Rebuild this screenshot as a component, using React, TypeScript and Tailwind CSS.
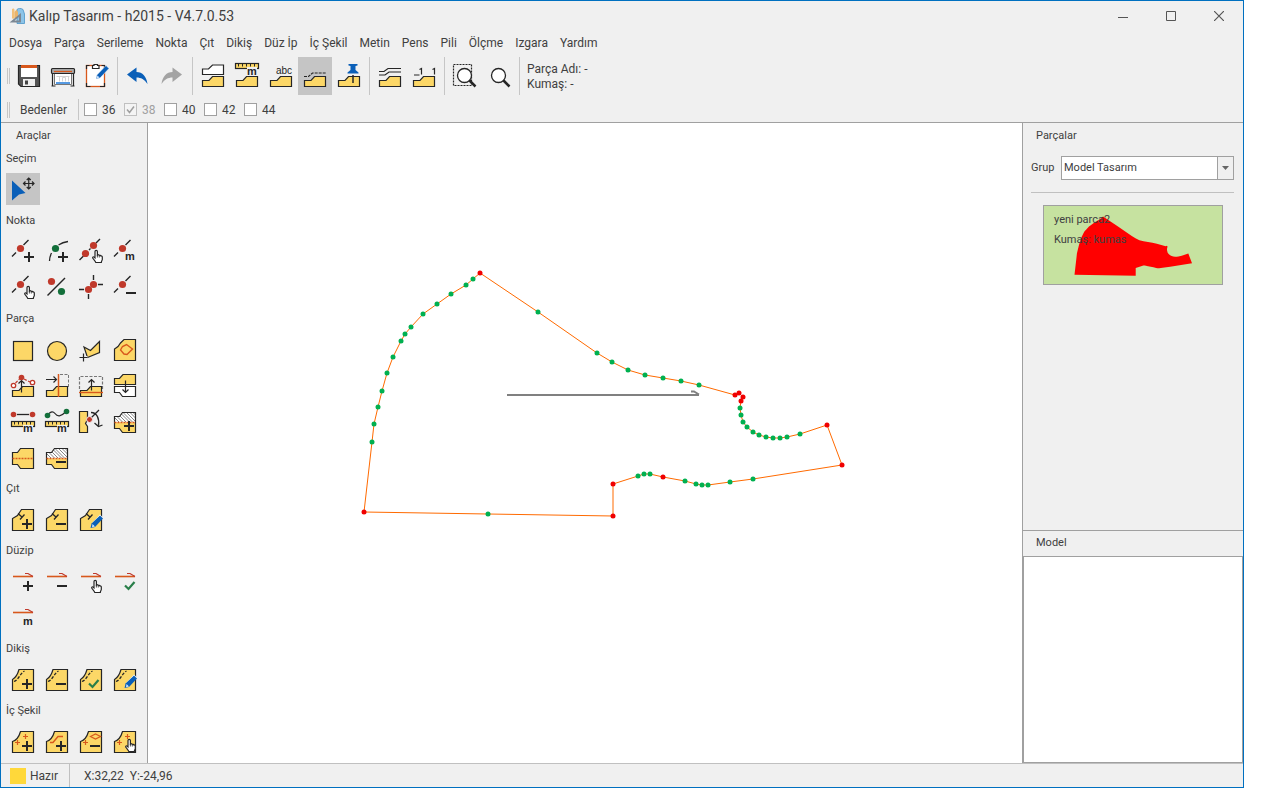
import { useState } from "react";
import type { FC, ReactNode } from "react";

type Point = [number, number, boolean?];

interface Tool {
  name: string;
  icon: ReactNode;
  active?: boolean;
}

interface ToolGroup {
  title: string;
  tools: Tool[];
}

const INK = "#262626";
const GOLD = "#fcd767";
const RED = "#c0392b";
const RUST = "#d8581c";
const GREEN = "#136f3a";
const BLUE = "#0a5fb8";

// outline of the part, third value marks a corner point
const points: Point[] = [
  [480, 273, true], [538, 312], [597, 353], [612, 362], [628, 370], [645, 375], [663, 378], [681, 381], [699, 385],
  [735, 395, true], [739, 393, true], [743, 397, true], [741, 401, true], [740, 408], [741, 415], [743, 422],
  [747, 427], [753, 432], [759, 435], [766, 437], [773, 438], [780, 438], [787, 437], [800, 434], [827, 425, true],
  [842, 465, true], [753, 479], [730, 482], [708, 485], [702, 485], [696, 484], [685, 481], [663, 477, true],
  [650, 474], [644, 474], [638, 476], [613, 484, true], [613, 516, true], [488, 514], [364, 512, true], [372, 442],
  [374, 424], [378, 407], [382, 391], [387, 373], [393, 357], [401, 341], [405, 334], [411, 327], [423, 314],
  [437, 304], [451, 294], [466, 285], [473, 279],
];

const outline = points.map(([x, y]) => `${x},${y}`).join(" ");

const menus = ["Dosya", "Parça", "Serileme", "Nokta", "Çıt", "Dikiş", "Düz İp", "İç Şekil", "Metin", "Pens", "Pili", "Ölçme", "Izgara", "Yardım"];

const sizes = [
  { size: "36" },
  { size: "38", locked: true },
  { size: "40" },
  { size: "42" },
  { size: "44" },
];

/* ---- icon parts ---- */

const Dot: FC<{ x: number; y: number; color?: string }> = ({ x, y, color = RED }) => (
  <circle cx={x} cy={y} r="3.6" fill={color} />
);

const Plus: FC<{ x?: number; y?: number }> = ({ x = 21, y = 21 }) => (
  <path d={`M${x - 5} ${y}h10M${x} ${y - 5}v10`} stroke={INK} strokeWidth="2" fill="none" />
);

const Minus: FC<{ x?: number; y?: number }> = ({ x = 21, y = 21 }) => (
  <path d={`M${x - 5} ${y}h10`} stroke={INK} strokeWidth="2" fill="none" />
);

const Check = () => <path d="M17 20.5l3.5 3.5 6-7" stroke="#2a7f4a" strokeWidth="2.2" fill="none" />;

const Hand: FC<{ x: number; y: number }> = ({ x, y }) => (
  <g transform={`translate(${x - 5} ${y - 6})`}>
    <path
      d="M3 8V1.5a1.2 1.2 0 0 1 2.4 0V5c.6-.5 1.6-.3 1.8.4.8-.4 1.6 0 1.7.6.8-.2 1.4.3 1.4 1V9.500c0 .8-1 1.500-1 3H3.800C3.500 11 1.500 9.500.7 8c-.3-1 .8-1.500 1.400-.8z"
      fill="#fff"
      stroke={INK}
      strokeWidth="1.2"
    />
    <path d="M5.400 5v2.500M7.300 5.500v2" stroke={INK} strokeWidth="0.8" />
  </g>
);

const Pencil = () => (
  <g>
    <path d="M18.500 19.500l7.500-8 3 3-8 8-4.500 2z" fill="#fff" />
    <path d="M26 12.500l3 3-8 8.500-4.500 1 1-4.500z" fill={BLUE} />
    <path d="M18.500 21l2.500 2.500-3 .7z" fill="#cfe6ff" />
  </g>
);

const Letters: FC<{ x: number; y: number; children: string }> = ({ x, y, children }) => (
  <text x={x} y={y} fontSize="11" fontWeight="bold" fontFamily="Liberation Sans, sans-serif" textAnchor="middle" fill={INK}>
    {children}
  </text>
);

const PointLine = () => (
  <g>
    <path d="M6 21.500l4-4M17.500 10l5-5" stroke={INK} strokeWidth="1.400" />
    <Dot x={14.500} y={13.500} />
  </g>
);

const Piece: FC<{ y?: number }> = ({ y = 27.5 }) => (
  <path d={`M6.500 ${y}v-6h6.500l3.500-4h11v10z`} fill={GOLD} stroke={INK} strokeWidth="1.200" />
);

const Arm = () => (
  <path d="M6.500 27.500V16.500C11 15 13 12 14.500 6.500H27.500V27.500z" fill={GOLD} stroke={INK} strokeWidth="1.200" />
);

const Seam = () => (
  <g>
    <path d="M6.500 27.500V16.500C10 14.500 11.500 12 13 6.500H27.500V27.500z" fill={GOLD} stroke={INK} strokeWidth="1.200" />
    <path d="M8 18.500c5-2 6-8 10.500-10.500" fill="none" stroke={INK} strokeWidth="1.300" strokeDasharray="3 1.500" />
  </g>
);

const Notch = () => (
  <g>
    <path d="M6.500 27.500V15.500L11.500 12.500L15.500 6.500H27.500V27.500z" fill={GOLD} stroke={INK} strokeWidth="1.200" />
    <path d="M12 10.500l4.500 4M14 16.500l4.500-5" stroke={INK} strokeWidth="1.300" />
  </g>
);

const Grain = () => (
  <g>
    <path d="M7 11.500h20" stroke={RUST} strokeWidth="1.600" />
    <path d="M19 8.500h3l5 3" stroke={RED} strokeWidth="1.200" fill="none" />
  </g>
);

const Cross: FC<{ x: number; y: number }> = ({ x, y }) => (
  <path d={`M${x - 2.5} ${y}h5M${x} ${y - 2.5}v5`} stroke={RUST} strokeWidth="1.200" />
);

const Ruler: FC<{ y: number }> = ({ y }) => (
  <g>
    <rect x="5.500" y={y} width="23" height="5" fill={GOLD} stroke={INK} strokeWidth="1.200" />
    <path d={`M8.500 ${y}v3M12.500 ${y}v3M16.500 ${y}v3M20.500 ${y}v3M24.500 ${y}v3`} stroke={INK} />
  </g>
);

const RulerM: FC = () => (
  <g>
    <Ruler y={16.5} />
    <rect x="17" y="20" width="10" height="8" fill="#f0f0f0" />
    <Letters x={22} y={27}>m</Letters>
  </g>
);

const halfPath = "M6.500 11.500h5l3-4H27.500V27.500H14.500l-3-4h-5z";

const Fold: FC<{ hatch?: boolean }> = ({ hatch }) => (
  <g>
    <path d={halfPath} fill={GOLD} />
    {hatch && (
      <g>
        <path d="M6.500 17.500v-6h5l3-4H27.500v10z" fill="#fff" />
        <path
          d="M7 13l4 4M9 11.500l5.500 5.500M12 11l6 6M13.500 9l8 8M15 7.500l9.500 9.500M18.500 7.500l9 9M22 7.500l5.500 5.500M25 7.500l2.500 2.500"
          stroke="#777"
          strokeWidth="0.900"
        />
      </g>
    )}
    <path d={halfPath} fill="none" stroke={INK} strokeWidth="1.200" />
    <path d="M6.500 17.500h21" stroke={RUST} strokeWidth="1.400" strokeDasharray="2 1" />
  </g>
);

const groups: ToolGroup[] = [
  {
    title: "Seçim",
    tools: [
      {
        name: "Seç ve taşı",
        active: true,
        icon: (
          <g>
            <path d="M6 7.500L19.500 20l-6.500 1.500L6 27.500z" fill={BLUE} />
            <path
              d="M17.500 10.500h10.500M22.750 5v11M19.500 8.500l-2 2 2 2M26 8.500l2 2-2 2M20.750 7l2-2 2 2M20.750 14l2 2 2-2"
              stroke={INK}
              strokeWidth="1.200"
              fill="none"
            />
          </g>
        ),
      },
    ],
  },
  {
    title: "Nokta",
    tools: [
      { name: "Nokta ekle", icon: <g><PointLine /><Plus x={23} y={22} /></g> },
      {
        name: "Eğri noktası ekle",
        icon: (
          <g>
            <path d="M9.500 26c0-3 .5-5 2-8M18.500 10c3-2 6-3 9.500-3.500" stroke={INK} strokeWidth="1.300" fill="none" />
            <Dot x={15.5} y={13.5} color={GREEN} />
            <Plus x={23} y={22} />
          </g>
        ),
      },
      {
        name: "Noktaları taşı",
        icon: (
          <g>
            <path d="M5.500 25l4-4M15 15l1.500-1.500M22 8l4-4" stroke={INK} strokeWidth="1.400" />
            <Dot x={11.5} y={18.5} />
            <Dot x={19.5} y={10.5} />
            <Hand x={23} y={21} />
          </g>
        ),
      },
      { name: "Ölçülü nokta", icon: <g><PointLine /><Letters x={22} y={25}>m</Letters></g> },
      { name: "Nokta taşı", icon: <g><PointLine /><Hand x={23} y={21} /></g> },
      {
        name: "Nokta tipi",
        icon: (
          <g>
            <path d="M7.500 24.500L25 7" stroke={INK} strokeWidth="1.400" />
            <Dot x={11.5} y={10.5} />
            <Dot x={21.5} y={20.5} color={GREEN} />
          </g>
        ),
      },
      {
        name: "Nokta hizala",
        icon: (
          <g>
            <path d="M19.500 4v5M24 13.500h5M5 18.500h5M14.500 23v5" stroke={INK} strokeWidth="1.400" />
            <Dot x={19.5} y={13.5} />
            <Dot x={14.5} y={18.5} />
          </g>
        ),
      },
      { name: "Nokta sil", icon: <g><PointLine /><Minus x={23} y={22} /></g> },
    ],
  },
  {
    title: "Parça",
    tools: [
      { name: "Dikdörtgen", icon: <rect x="7.500" y="8.500" width="19" height="19" fill={GOLD} stroke={INK} strokeWidth="1.200" /> },
      { name: "Daire", icon: <circle cx="17" cy="18" r="9.500" fill={GOLD} stroke={INK} strokeWidth="1.200" /> },
      {
        name: "Serbest çizim",
        icon: (
          <g>
            <path d="M10 14l6.500 3.500L25.500 8.500V19.500l-12 5z" fill={GOLD} stroke={INK} strokeWidth="1.200" />
            <path d="M5.500 24.500h8M9.500 20.500v8" stroke="#f0f0f0" strokeWidth="3" />
            <path d="M5.500 24.500h8M9.500 20.500v8" stroke={INK} strokeWidth="1.200" />
          </g>
        ),
      },
      {
        name: "İç parçadan üret",
        icon: (
          <g>
            <path d="M6.500 27.500V16L10 13.500 12.500 10 16 6.500H27.500V27.500z" fill={GOLD} stroke={INK} strokeWidth="1.200" />
            <path d="M12.500 17l2-3.500L18.500 11.500l6 4.500-5.500 5.500-3-.5z" fill="none" stroke={RUST} strokeWidth="1.400" />
          </g>
        ),
      },
      {
        name: "Tepe taşı",
        icon: (
          <g>
            <Piece />
            <path d="M9.500 14l4-4M18 10l6 3" stroke={RED} strokeWidth="1.200" strokeDasharray="3 1.500" />
            <circle cx="7.500" cy="16.500" r="2.200" fill="#fff" stroke={RED} strokeWidth="1.300" />
            <circle cx="26.500" cy="13.500" r="2.200" fill="#fff" stroke={RED} strokeWidth="1.300" />
            <path d="M15.500 23.500V11.500M12.500 14.500l3-3 3 3" stroke={INK} strokeWidth="1.200" fill="none" />
            <circle cx="15.500" cy="8.500" r="2.800" fill={RED} />
          </g>
        ),
      },
      {
        name: "Kenara uzat",
        icon: (
          <g>
            <Piece />
            <path d="M20 5.500h8.500V18" stroke="#777" fill="none" strokeDasharray="3 1.500" />
            <path d="M18.500 5v23" stroke={RUST} strokeWidth="1.500" />
            <path d="M6 10.500h10.500M13.500 7.500l3 3-3 3" stroke={INK} strokeWidth="1.200" fill="none" />
          </g>
        ),
      },
      {
        name: "Yukarı uzat",
        icon: (
          <g>
            <path d="M5.500 20V7.500h23V20" stroke="#777" strokeWidth="1.200" fill="none" strokeDasharray="3 1.500" />
            <Piece />
            <path d="M5 23.500h24" stroke={RUST} strokeWidth="1.400" />
            <path d="M17.500 21.500V10.500M14.500 13.500l3-3 3 3" stroke={INK} strokeWidth="1.200" fill="none" />
          </g>
        ),
      },
      {
        name: "Aynala",
        icon: (
          <g>
            <path d="M6.500 15.500v-6h5l3.500-4h12.500v10z" fill={GOLD} stroke={INK} strokeWidth="1.200" />
            <path d="M6.500 17.500v6h5l3 4h13v-10z" fill="#fff" stroke={INK} strokeWidth="1.200" />
            <path d="M17.500 11.500v12M14.500 20.500l3 3 3-3" stroke={INK} strokeWidth="1.200" fill="none" />
          </g>
        ),
      },
      {
        name: "Düz ölç",
        icon: (
          <g>
            <path d="M11 9.500h12" stroke={INK} strokeWidth="1.300" />
            <circle cx="7.500" cy="9.500" r="2.800" fill={RED} />
            <circle cx="26.500" cy="9.500" r="2.800" fill={RED} />
            <RulerM />
          </g>
        ),
      },
      {
        name: "Eğri ölç",
        icon: (
          <g>
            <path d="M9 8.500c2-2 4-2.500 6 0 2.500 3.500 6 3 10-1" stroke={INK} strokeWidth="1.200" fill="none" />
            <circle cx="7.500" cy="10.500" r="2.800" fill={GREEN} />
            <circle cx="26.500" cy="6.500" r="2.800" fill={GREEN} />
            <RulerM />
          </g>
        ),
      },
      {
        name: "Döndür",
        icon: (
          <g>
            <path d="M5.500 6.500h8v8l-2 4 2 3v6h-8z" fill={GOLD} stroke={INK} strokeWidth="1.200" />
            <path d="M15.500 14.500L25 5M17 7.500c6 0 8.500 6 7.500 13M20.500 18l4 3.500 4-1.500" stroke={INK} strokeWidth="1.300" fill="none" />
            <circle cx="15.500" cy="14.500" r="3" fill={RED} stroke="#f0f0f0" />
          </g>
        ),
      },
      { name: "Kat ekle", icon: <g><Fold hatch /><Plus /></g> },
      { name: "Kat çizgisi", icon: <Fold /> },
      { name: "Kat sil", icon: <g><Fold hatch /><Minus /></g> },
    ],
  },
  {
    title: "Çıt",
    tools: [
      { name: "Çıt ekle", icon: <g><Notch /><Plus /></g> },
      { name: "Çıt sil", icon: <g><Notch /><Minus /></g> },
      { name: "Çıt düzenle", icon: <g><Notch /><Pencil /></g> },
    ],
  },
  {
    title: "Düzip",
    tools: [
      { name: "Düzip ekle", icon: <g><Grain /><Plus x={22} /></g> },
      { name: "Düzip sil", icon: <g><Grain /><Minus x={22} /></g> },
      { name: "Düzip taşı", icon: <g><Grain /><Hand x={22} y={21} /></g> },
      { name: "Düzip onayla", icon: <g><Grain /><Check /></g> },
      { name: "Düzip ölçü", icon: <g><Grain /><Letters x={22} y={24}>m</Letters></g> },
    ],
  },
  {
    title: "Dikiş",
    tools: [
      { name: "Dikiş ekle", icon: <g><Seam /><Plus /></g> },
      { name: "Dikiş sil", icon: <g><Seam /><Minus /></g> },
      { name: "Dikiş onayla", icon: <g><Seam /><g transform="translate(-2 0)"><Check /></g></g> },
      { name: "Dikiş düzenle", icon: <g><Seam /><Pencil /></g> },
    ],
  },
  {
    title: "İç Şekil",
    tools: [
      { name: "Şekil ekle", icon: <g><Arm /><Cross x={19.5} y={11.5} /><Cross x={11.5} y={17.5} /><Plus /></g> },
      {
        name: "Çizgi ekle",
        icon: (
          <g>
            <Arm />
            <path d="M10 17.500h3l5-6h5" stroke={RUST} strokeWidth="1.400" fill="none" />
            <Plus />
          </g>
        ),
      },
      {
        name: "Şekil sil",
        icon: (
          <g>
            <Arm />
            <Cross x={11.5} y={17.5} />
            <path d="M16.500 11.500l5-2.500 5 2.500-5 2.500z" stroke={RUST} strokeWidth="1.200" fill="none" />
            <Minus />
          </g>
        ),
      },
      { name: "Şekil taşı", icon: <g><Arm /><Cross x={19.5} y={11.5} /><Cross x={11.5} y={17.5} /><Hand x={22} y={20} /></g> },
    ],
  },
];

const BarPiece = () => <Piece y={29.5} />;

const toolbar: Tool[][] = [
  [
    {
      name: "Kaydet",
      icon: (
        <g>
          <path d="M6.500 8.500h21v21H9l-2.500-2.500z" fill="#555" stroke={INK} strokeWidth="1.200" />
          <path d="M9 8h16v4H9z" fill={RUST} />
          <path d="M9 11h16v9H9z" fill="#fff" />
          <path d="M11 22h12v7H11z" fill="#f0f0f0" />
          <path d="M13 23.500h3v4h-3z" fill="#444" />
        </g>
      ),
    },
    {
      name: "Çizdir",
      icon: (
        <g>
          <rect x="5.500" y="11.500" width="23" height="5" rx="1" fill="#a6a6a6" stroke={INK} strokeWidth="1.200" />
          <path d="M8 14.500h18" stroke={RUST} strokeWidth="1.200" />
          <path d="M9 17h16v10H9z" fill="#fff" />
          <path d="M10.500 19.500h13M13.500 19.500v5M16.500 24.500v-4h3v4M22.500 19.500v5" stroke="#d4d4d4" fill="none" />
          <path d="M10 26h14" stroke="#1e78d8" strokeWidth="1.500" />
          <path d="M8.500 17v10.500h17V17" fill="none" stroke="#777" />
          <path d="M6.500 17v11.500M27.500 17v11.500M5.500 29h4M24.500 29h4" stroke={INK} strokeWidth="1.200" />
        </g>
      ),
    },
    {
      name: "Düzenle",
      icon: (
        <g>
          <rect x="6.500" y="8.500" width="18" height="21" fill="#fff" stroke={RUST} strokeWidth="1.300" />
          <path d="M6.500 12V8.500h3M21.500 8.500h3v3M6.500 26v3.500h4M20 29.500h4.500V26" fill="none" stroke={INK} strokeWidth="1.200" />
          <path d="M12.500 11.500v-3h1.500V7.500h3.500v1h1.500v3z" fill="#fff" stroke={INK} strokeWidth="1.200" />
          <path d="M26 8.500l3 3-9 9.500-4 1 .8-4z" fill={BLUE} stroke="#fff" strokeWidth="0.500" />
          <path d="M17.500 18.500l2 2-3 1z" fill="#cfe6ff" />
        </g>
      ),
    },
  ],
  [
    { name: "Geri al", icon: <path d="M6 17.500L15.500 10.500v4.500c6 0 10 4.500 11 12-3-4.500-6.500-6.500-11-6.500V25z" fill={BLUE} /> },
    { name: "Yinele", icon: <path d="M27 17.500L17.500 10.500v4.500c-6 0-10 4.500-11 12 3-4.500 6.500-6.500 11-6.500V25z" fill="#a3a3a3" /> },
  ],
  [
    { name: "Parçalar", icon: <g><path d="M6.500 17.500v-5.500h6l4-4h11v9.500z" fill="#fff" stroke={INK} strokeWidth="1.200" /><BarPiece /></g> },
    {
      name: "Ölçüler",
      icon: (
        <g>
          <Ruler y={6.5} />
          <rect x="17" y="10" width="10" height="8" fill="#f0f0f0" />
          <Letters x={22} y={18}>m</Letters>
          <BarPiece />
        </g>
      ),
    },
    {
      name: "Yazılar",
      icon: (
        <g>
          <text x="20" y="17" fontSize="10" fontFamily="Liberation Sans, sans-serif" textAnchor="middle" fill={INK}>abc</text>
          <BarPiece />
        </g>
      ),
    },
    {
      name: "Dikiş payı",
      active: true,
      icon: <g><path d="M6 19.500h4.500l4-3.500H28" stroke={INK} strokeWidth="1.200" fill="none" strokeDasharray="3 1" /><BarPiece /></g>,
    },
    {
      name: "Sabitle",
      icon: (
        <g>
          <BarPiece />
          <path d="M16.500 7h9v1.500l-2 .5v4l3 2.500v1h-11v-1l3-2.500V9l-2-.500z" fill={BLUE} />
          <path d="M21 18v8" stroke={INK} strokeWidth="1.500" />
        </g>
      ),
    },
  ],
  [
    {
      name: "Katmanlar",
      icon: <g><path d="M6 14.500h5l4-3h13M6 18h6l4-3h12" stroke={INK} strokeWidth="1.200" fill="none" /><BarPiece /></g>,
    },
    {
      name: "Numaralar",
      icon: (
        <g>
          <path d="M12.500 12.500l2-1v6M25.500 12.500l2-1v6M7 18h5.500" stroke={INK} strokeWidth="1.200" fill="none" />
          <BarPiece />
        </g>
      ),
    },
  ],
  [
    {
      name: "Alan yakınlaştır",
      icon: (
        <g>
          <path d="M5.500 7.500h18v21h-18z" fill="none" stroke={INK} strokeWidth="1.200" strokeDasharray="2 1" />
          <circle cx="16.500" cy="18.500" r="7" fill="#fff" stroke={INK} strokeWidth="1.300" />
          <path d="M21.500 23.500l6 6" stroke={INK} strokeWidth="2.500" />
        </g>
      ),
    },
    {
      name: "Yakınlaştır",
      icon: (
        <g>
          <circle cx="16.500" cy="18.500" r="7" fill="#fff" stroke={INK} strokeWidth="1.300" />
          <path d="M21.500 23.500l6 6" stroke={INK} strokeWidth="2.500" />
        </g>
      ),
    },
  ],
];

const Logo = () => (
  <svg width="16" height="16" viewBox="0 0 16 16" aria-hidden>
    <path d="M8 1.500c1.500-1.500 4-1.500 6 0L15.500 6v9.500H8z" fill="#8cc4e8" stroke="#4a94c8" strokeWidth="0.800" />
    <path d="M3 1c1-1 2.500-.500 2.500 1v8c0 1-2.500 1-2.500 0z" fill="#f2c078" />
    <path d="M5.500 4l2-2.500L9 4v6H5.500z" fill="#e9b46a" />
    <path d="M0.500 14.500L12 5v9.500zM5.500 12.500h4.500V9z" fill="#7c8894" fillRule="evenodd" />
  </svg>
);

const Grip = () => <span className="h-4 w-[3px] shrink-0 border-x border-[#c6c6c6]" />;

const Divider = () => <span className="mx-[3px] w-px self-stretch bg-[#c6c6c6]" />;

const ToolButton: FC<{ tool: Tool }> = ({ tool }) => (
  <button title={tool.name} aria-label={tool.name} className={`h-8 w-[34px] ${tool.active ? "bg-[#c5c5c5]" : "hover:bg-[#dcdcdc]"}`}>
    <svg width="34" height="32" viewBox="0 0 34 32" aria-hidden>
      {tool.icon}
    </svg>
  </button>
);

const App: FC = () => {
  const [checked, setChecked] = useState<string[]>(["38"]);

  const toggle = (size: string) => {
    setChecked(checked.includes(size) ? checked.filter((s) => s !== size) : [...checked, size]);
  };

  return (
    <div className="h-screen bg-white pr-[26px] font-['Roboto',sans-serif] text-xs text-[#404040]">
      <div className="flex h-full flex-col border border-[#0070c0] bg-[#f0f0f0]">
        <header className="flex h-[30px] shrink-0 items-center">
          <h1 className="flex flex-1 items-center gap-1 pl-2 text-sm">
            <Logo />
            Kalıp Tasarım - h2015 - V4.7.0.53
          </h1>
          <button aria-label="Küçült" className="flex h-7 w-12 items-center justify-center">
            <svg width="10" height="10"><path d="M0 6.500h10" stroke="#555" /></svg>
          </button>
          <button aria-label="Ekranı kapla" className="flex h-7 w-12 items-center justify-center">
            <svg width="10" height="10"><path d="M.5.500h9v9h-9z" fill="none" stroke="#555" /></svg>
          </button>
          <button aria-label="Kapat" className="flex h-7 w-12 items-center justify-center">
            <svg width="10" height="10"><path d="M0 0l10 10M10 0L0 10" stroke="#555" strokeWidth="1.200" /></svg>
          </button>
        </header>

        <nav className="flex h-6 shrink-0 items-center gap-3 pl-2">
          {menus.map((menu) => (
            <button key={menu}>{menu}</button>
          ))}
        </nav>

        <div className="mt-0.5 flex h-[38px] shrink-0 items-center pl-1.5">
          <Grip />
          <div className="flex h-full items-center pl-0.5">
            {toolbar.map((section, i) => (
              <div key={i} className="flex h-full">
                {section.map((tool) => (
                  <button
                    key={tool.name}
                    title={tool.name}
                    aria-label={tool.name}
                    className={`w-[34px] ${tool.active ? "bg-[#c5c5c5]" : "hover:bg-[#dcdcdc]"}`}
                  >
                    <svg width="34" height="38" viewBox="0 0 34 38" aria-hidden>{tool.icon}</svg>
                  </button>
                ))}
                <Divider />
              </div>
            ))}
          </div>
          <div className="pt-0.5 pl-1 leading-[15px]">
            <p>Parça Adı: -</p>
            <p>Kumaş: -</p>
          </div>
        </div>

        <div className="flex h-7 shrink-0 items-center border-b border-[#a0a0a0] pt-1 pb-0.5 pl-1.5">
          <Grip />
          <span className="w-[65px] pl-2.5">Bedenler</span>
          <Divider />
          <div className="flex pl-0.5">
            {sizes.map(({ size, locked }) => (
              <label key={size} className={`flex w-10 items-center gap-[5px] ${locked ? "text-[#a0a0a0]" : ""}`}>
                <span className="relative flex">
                  <input
                    type="checkbox"
                    checked={checked.includes(size)}
                    disabled={locked}
                    onChange={() => toggle(size)}
                    className="peer size-[13px] appearance-none border border-[#a0a0a0] bg-white disabled:border-[#c0c0c0] disabled:bg-[#f4f4f4]"
                  />
                  <svg className="pointer-events-none invisible absolute inset-0 peer-checked:visible" width="13" height="13">
                    <path d="M3 6.500L5.500 9.500 10 3.500" fill="none" stroke="#a0a0a0" strokeWidth="1.500" />
                  </svg>
                </span>
                {size}
              </label>
            ))}
          </div>
        </div>

        <div className="flex min-h-0 flex-1">
          <aside className="w-[147px] shrink-0 border-r border-[#a0a0a0] pl-[5px] text-[11px]">
            <h2 className="flex h-[26px] items-center pl-2.5">Araçlar</h2>
            {groups.map((group) => (
              <section key={group.title} className="pb-1.5">
                <h3 className="h-5 leading-5">{group.title}</h3>
                <div className="flex flex-wrap gap-y-1 pt-1">
                  {group.tools.map((tool) => (
                    <ToolButton key={tool.name} tool={tool} />
                  ))}
                </div>
              </section>
            ))}
          </aside>

          <main className="min-w-0 flex-1 bg-white">
            <svg className="size-full" viewBox="148 123 874 640" preserveAspectRatio="xMinYMin slice" aria-label="Parça çizimi">
              <path d="M507 395h192M691 391.500h3l5 3" stroke="#808080" strokeWidth="2" fill="none" />
              <polygon points={outline} fill="none" stroke="#ff6a00" strokeWidth="1" />
              {points.map(([x, y, corner], i) => (
                <circle key={i} cx={x} cy={y} r="2.500" fill={corner ? "#f00000" : "#00b050"} />
              ))}
            </svg>
          </main>

          <aside className="flex w-[221px] shrink-0 flex-col border-l border-[#a0a0a0] text-[11px]">
            <h2 className="flex h-[26px] shrink-0 items-center pl-[13px]">Parçalar</h2>
            <div className="mt-[7px] mr-[9px] ml-2 flex items-center border-b border-[#c0c0c0] pb-3">
              <label htmlFor="group" className="w-[30px]">Grup</label>
              <div className="relative flex-1">
                <select id="group" className="h-6 w-full appearance-none border border-[#a0a0a0] bg-white pr-5 pl-0.5">
                  <option>Model Tasarım</option>
                </select>
                <span className="pointer-events-none absolute inset-y-px right-px flex w-4 items-center justify-center border-l border-[#a0a0a0] bg-[#f0f0f0]">
                  <svg width="7" height="4"><path d="M0 0h7L3.500 4z" fill="#666" /></svg>
                </span>
              </div>
            </div>
            <button className="relative mx-5 mt-3 h-20 w-[180px] border border-[#a0a0a0] bg-[#c6e2a0] px-2.5 text-left">
              <svg className="absolute top-2.5 left-[30px]" width="119" height="60" viewBox="362 271 484 246" preserveAspectRatio="none" aria-hidden>
                <polygon points={outline} fill="#ff0000" />
              </svg>
              <span className="relative block leading-5">yeni parca2</span>
              <span className="relative block leading-5">Kumaş: kumas</span>
              <span className="block h-[30px]" />
            </button>
            <div className="flex-1" />
            <h2 className="flex h-[26px] shrink-0 items-center border-t border-[#a0a0a0] pl-[13px]">Model</h2>
            <div className="h-[207px] shrink-0 border border-[#a0a0a0] bg-white" />
          </aside>
        </div>

        <footer className="flex h-6 shrink-0 items-center border-t border-[#c0c0c0] pl-[9px]">
          <span className="mr-1 size-4 bg-[#ffd83a]" />
          <span className="flex h-full w-10 items-center border-r border-[#c0c0c0]">Hazır</span>
          <span className="pl-3.5 whitespace-pre">X:32,22  Y:-24,96</span>
        </footer>
      </div>
    </div>
  );
};

export default App;
